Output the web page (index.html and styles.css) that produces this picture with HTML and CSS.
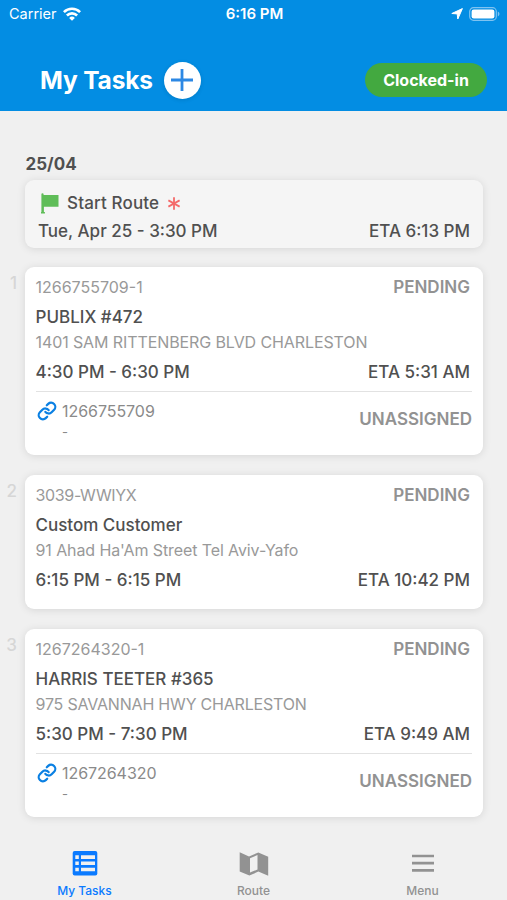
FILE: index.html
```html
<!DOCTYPE html>
<html>
<head>
	<title>My Tasks</title>
	<meta charset="utf-8">
	<link rel="stylesheet" href="styles.css">
</head>
<body>
<div class="header">
	<div class="status">
		<div class="carrier">
			<span>Carrier</span>
			<svg width="18" height="14" viewBox="0 0 18 14" fill="none" stroke="#fff" stroke-width="2.6">
				<path d="M.9 5.1a11.4 11.4 0 0 1 16.2 0"/>
				<path d="M3.9 8.5a7.2 7.2 0 0 1 10.2 0"/>
				<path d="M9 13.8 6.1 10.9a4.1 4.1 0 0 1 5.8 0z" fill="#fff" stroke="none"/>
			</svg>
		</div>
		<div class="clock">6:16 PM</div>
		<div class="power">
			<svg width="12" height="12" viewBox="0 0 12 12"><path d="M11.4.6 6.8 11 6.2 5.9.8 5.5z" fill="#fff" stroke="#fff" stroke-linejoin="round"/></svg>
			<svg width="31" height="14" viewBox="0 0 31 14">
				<rect x=".7" y=".7" width="26.6" height="12.6" rx="3.8" fill="none" stroke="#7fc3f1" stroke-width="1.2"/>
				<rect x="2.6" y="2.5" width="22.8" height="9" rx="2.2" fill="#fff"/>
				<path d="M28.8 4.6c2.2.8 2.2 4 0 4.8z" fill="#7fc3f1"/>
			</svg>
		</div>
	</div>
	<div class="title-bar">
		<h1>My Tasks</h1>
		<div class="add">
			<svg width="22" height="22" viewBox="0 0 22 22"><path d="M11 0v22M0 11h22" stroke="#2c88e4" stroke-width="2.8"/></svg>
		</div>
		<div class="clocked">Clocked-in</div>
	</div>
</div>

<div class="tasks">
	<h2>25/04</h2>
	<div class="card start">
		<div class="row route">
			<svg width="18" height="21" viewBox="0 0 18 21" fill="#5fbd58"><path d="M.4 1.2Q.4.3 1.5.3T2.6 1.2V2H17.5V13.7H2.9V19H3.9V20.6H0V19H.4z"/></svg>
			<span>Start Route</span>
			<svg class="star" width="12" height="13" viewBox="0 0 12 13"><path d="M6 .3v12.4M.4 3.4l11.2 6.2M11.6 3.4.4 9.6" stroke="#f46a6a" stroke-width="1.8"/></svg>
		</div>
		<div class="row when"><span class="date">Tue, Apr 25 - 3:30 PM</span><span class="eta">ETA 6:13 PM</span></div>
	</div>

	<div class="card">
		<span class="num">1</span>
		<div class="row id"><span>1266755709-1</span><b>PENDING</b></div>
		<div class="name">PUBLIX #472</div>
		<div class="address">1401 SAM RITTENBERG BLVD CHARLESTON</div>
		<div class="row time"><span>4:30 PM - 6:30 PM</span><span class="eta">ETA 5:31 AM</span></div>
		<div class="row linked">
			<svg width="20" height="20" viewBox="0 0 24 24"><path d="M10 13a5 5 0 0 0 7.54.54l3-3a5 5 0 0 0-7.07-7.07l-1.72 1.71M14 11a5 5 0 0 0-7.54-.54l-3 3a5 5 0 0 0 7.07 7.07l1.71-1.71"/></svg>
			<div class="ref">1266755709<div class="note">-</div></div>
			<b>UNASSIGNED</b>
		</div>
	</div>

	<div class="card short">
		<span class="num">2</span>
		<div class="row id"><span class="code">3039-WWIYX</span><b>PENDING</b></div>
		<div class="name">Custom Customer</div>
		<div class="address">91 Ahad Ha'Am Street Tel Aviv-Yafo</div>
		<div class="row time"><span>6:15 PM - 6:15 PM</span><span class="eta">ETA 10:42 PM</span></div>
	</div>

	<div class="card">
		<span class="num">3</span>
		<div class="row id"><span>1267264320-1</span><b>PENDING</b></div>
		<div class="name">HARRIS TEETER #365</div>
		<div class="address tight">975 SAVANNAH HWY CHARLESTON</div>
		<div class="row time"><span>5:30 PM - 7:30 PM</span><span class="eta">ETA 9:49 AM</span></div>
		<div class="row linked">
			<svg width="20" height="20" viewBox="0 0 24 24"><path d="M10 13a5 5 0 0 0 7.54.54l3-3a5 5 0 0 0-7.07-7.07l-1.72 1.71M14 11a5 5 0 0 0-7.54-.54l-3 3a5 5 0 0 0 7.07 7.07l1.71-1.71"/></svg>
			<div class="ref">1267264320<div class="note">-</div></div>
			<b>UNASSIGNED</b>
		</div>
	</div>
</div>

<div class="tabs">
	<div class="tab current">
		<svg width="26" height="26" viewBox="0 0 26 26">
			<rect x=".7" y="1" width="24.6" height="24.6" rx="2" fill="#0a7aff"/>
			<path d="M3.3 5.3h3.5v3.6H3.3zM9 5.3h14v3.6H9zM3.3 11.5h3.5v3.6H3.3zM9 11.5h14v3.6H9zM3.3 17.7h3.5v3.6H3.3zM9 17.7h14v3.6H9z" fill="#f0f0f0"/>
		</svg>
		<span>My Tasks</span>
	</div>
	<div class="tab">
		<svg width="30" height="26" viewBox="0 0 30 26">
			<path d="M.7 2.2 10 6.4 19.3 2.4 29.2 6.8V25.8L19.3 21.6 10.4 25.6.7 21.4z" fill="#929292"/>
			<path d="M11 8.2 18.5 5V19.4L11 22.6z" fill="#f0f0f0"/>
		</svg>
		<span>Route</span>
	</div>
	<div class="tab">
		<svg width="24" height="26" viewBox="0 0 24 26"><path d="M1 6h22M1 13.2h22M1 20.4h22" stroke="#929292" stroke-width="2.7"/></svg>
		<span>Menu</span>
	</div>
</div>
</body>
</html>
```
FILE: styles.css
```css
body,h1,h2{margin:0;padding:0;}
body{width:507px;height:900px;overflow:hidden;background:#f0f0f0;color:#505050;font:500 17px/24px Inter,"Liberation Sans",sans-serif;}
svg{display:block;flex:none;}
.header{height:111px;background:#038de3;color:#fff;}
.status{display:grid;grid-template-columns:1fr auto 1fr;align-items:center;height:28px;padding:0 7px 0 9px;font-size:14.5px;}
.carrier{display:flex;align-items:center;gap:6px;font-weight:400;}
.clock{font-size:15px;font-weight:600;}
.power{display:flex;align-items:center;justify-content:flex-end;gap:6px;}
.title-bar{display:flex;align-items:center;height:38px;padding:33px 20px 0 40px;}
h1{font-size:24.5px;line-height:38px;font-weight:700;letter-spacing:-.15px;}
.add{display:flex;align-items:center;justify-content:center;width:37px;height:37px;margin-left:11px;border-radius:50%;background:#fff;box-shadow:0 1px 4px rgba(0,0,0,.12);}
.clocked{width:122px;margin-left:auto;border-radius:17px;background:#43a940;font-size:16px;line-height:34px;font-weight:700;text-align:center;}

.tasks{height:732px;padding:0 24px 0 25px;}
h2{padding:41px 0 0 .5px;font-size:17px;line-height:24px;font-weight:700;}
.card{position:relative;box-sizing:border-box;height:188px;margin-bottom:20px;padding:10px 11px 0 10.5px;border-radius:9px;background:#fff;box-shadow:0 1px 9px rgba(0,0,0,.11);}
.card.short{height:134px;}
.card.start{height:68px;margin:4px 0 19px;padding:9px 13px 0;background:#f5f5f5;}
.row{display:flex;justify-content:space-between;}
.route{justify-content:flex-start;align-items:center;height:28px;letter-spacing:.15px;}
.route svg{margin:0 8px 0 3px;}
.route .star{margin:0 0 0 9px;}
.when{line-height:28px;}
.num{position:absolute;right:466px;top:6px;font-size:17px;line-height:20px;color:#d6d6d6;}
.id{padding:0 2px 7px 0;font-size:16px;line-height:20px;font-weight:400;color:#999;}
.code{letter-spacing:-.35px;}
.row b{font-size:17px;font-weight:600;color:#929292;}
.name{line-height:26px;}
.address{font-size:16px;line-height:24px;font-weight:400;letter-spacing:-.1px;color:#999;}
.tight{letter-spacing:-.2px;}
.time{padding-right:2px;line-height:36px;}
.linked{justify-content:flex-start;height:55px;border-top:1px solid #e2e2e2;margin-top:1px;font-size:16px;line-height:20px;font-weight:400;color:#8a8a8a;}
.linked svg{margin:9px 5px 0 1.5px;fill:none;stroke:#0b80e3;stroke-width:2.7;stroke-linecap:round;}
.ref{padding-top:9px;letter-spacing:-.05px;}
.note{font-size:13px;line-height:22px;}
.linked b{margin:17px 0 0 auto;}

.tabs{display:grid;grid-template-columns:repeat(3,1fr);height:57px;}
.tab{display:flex;flex-direction:column;align-items:center;padding-top:7px;font-size:12px;line-height:16px;color:#929292;}
.tab span{margin-top:7px;}
.tab.current{color:#0a7aff;}
```
